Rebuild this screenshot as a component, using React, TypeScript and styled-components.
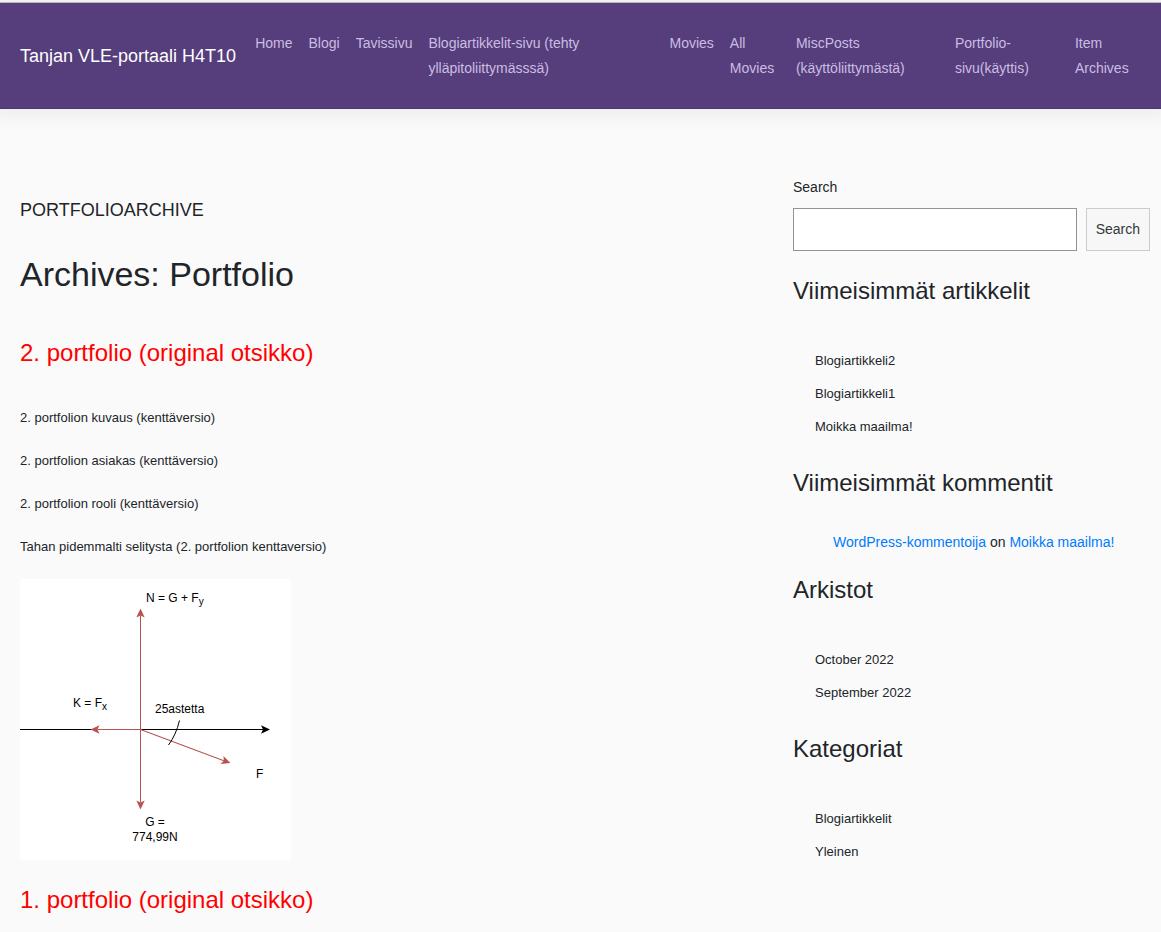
import React from "react";
import styled, { createGlobalStyle } from "styled-components";

const GlobalStyle = createGlobalStyle`
  * { box-sizing: border-box; }
  body {
    margin: 0;
    background: #fafafa;
    color: #212529;
    font: 14px/25px "Liberation Sans", Arial, sans-serif;
  }
  h1, h2, p, ul, ol { margin: 0; padding: 0; font-weight: 400; }
  ul, ol { list-style: none; }
  a { text-decoration: none; }
`;

const Header = styled.header`
  display: flex;
  align-items: center;
  gap: 11px;
  padding: 20px;
  background: #563d7c;
  border-top: 1px solid #b9b9b4;
  margin-top: 2px;
  box-shadow: 0 0 16px 8px rgba(0, 0, 0, 0.05), inset 0 -1px 0 rgba(0, 0, 0, 0.1);
`;

const Brand = styled.a`
  flex: none;
  color: #fff;
  font-size: 18px;
`;

const Menu = styled.ul`
  display: flex;
  flex: 1;
`;

const MenuItem = styled.li<{ $share?: number }>`
  flex: ${(p) => (p.$share ? `${p.$share} 1 0` : "none")};
  min-width: 0;
`;

const MenuLink = styled.a`
  display: block;
  padding: 8px;
  color: #cbbde2;
`;

const Page = styled.div`
  display: grid;
  grid-template-columns: 2fr 1fr;
`;

const Main = styled.main`
  padding: 89px 20px 0;
`;

const Kicker = styled.p`
  font-size: 18px;
`;

const PageTitle = styled.h1`
  margin-top: 31px;
  font-size: 34px;
  line-height: 40px;
`;

const Post = styled.article`
  &:first-of-type { margin-top: 44px; }
`;

const PostTitle = styled.h2`
  margin-bottom: 38px;
  color: #f00;
  font-size: 24px;
  line-height: 30px;
`;

const Field = styled.p`
  margin-bottom: 20px;
  font-size: 13px;
  line-height: 23px;
`;

const Diagram = styled.svg`
  display: block;
  width: 271px;
  height: 281px;
  margin: 21px 0 25px;
  background: #fff;
  font: 12px "Liberation Sans", Arial, sans-serif;
`;

const Sidebar = styled.aside`
  padding: 66px 11px 0 19px;
`;

const SearchForm = styled.form`
  margin-bottom: 25px;
`;

const SearchLabel = styled.label`
  display: block;
  margin-bottom: 8px;
`;

const SearchRow = styled.div`
  display: flex;
  gap: 9px;
`;

const SearchInput = styled.input`
  flex: 1;
  min-width: 0;
  height: 43px;
  padding: 8px;
  border: 1px solid #949494;
  background: #fff;
  font: inherit;
`;

const SearchButton = styled.button`
  padding: 0 9px;
  border: 1px solid #ccc;
  background: #f7f7f7;
  color: #32373c;
  font: inherit;
`;

const WidgetTitle = styled.h2<{ $compact?: boolean }>`
  margin-bottom: ${(p) => (p.$compact ? 32 : 38)}px;
  font-size: 24px;
  line-height: 30px;
`;

const LinkList = styled.ul`
  margin-bottom: 25px;
  padding-left: 22px;
  font-size: 13px;
  line-height: 33px;
`;

const PlainLink = styled.a`
  color: inherit;
`;

const Comments = styled.ol`
  margin-bottom: 20px;
  padding-left: 40px;
`;

const BlueLink = styled.a`
  color: #007bff;
`;

const menu: { label: string; share?: number }[] = [
  { label: "Home" },
  { label: "Blogi" },
  { label: "Tavissivu" },
  { label: "Blogiartikkelit-sivu (tehty ylläpitoliittymässsä)", share: 241 },
  { label: "Movies" },
  { label: "All Movies", share: 66 },
  { label: "MiscPosts (käyttöliittymästä)", share: 159 },
  { label: "Portfolio-sivu(käyttis)", share: 120 },
  { label: "Item Archives", share: 74 },
];

const fields = [
  "2. portfolion kuvaus (kenttäversio)",
  "2. portfolion asiakas (kenttäversio)",
  "2. portfolion rooli (kenttäversio)",
  "Tahan pidemmalti selitysta (2. portfolion kenttaversio)",
];

function Widget({ title, links }: { title: string; links: string[] }) {
  return (
    <section>
      <WidgetTitle>{title}</WidgetTitle>
      <LinkList>
        {links.map((link) => (
          <li key={link}>
            <PlainLink href="#">{link}</PlainLink>
          </li>
        ))}
      </LinkList>
    </section>
  );
}

function Arrow({ x, y, angle, length, color }: { x: number; y: number; angle: number; length: number; color: string }) {
  return (
    <g transform={`translate(${x} ${y}) rotate(${angle})`}>
      <path d={`M0 0H${length - 7}`} stroke={color} />
      <path d={`M${length} 0l-9 4.200 2-4.200-2-4.200z`} fill={color} />
    </g>
  );
}

function ForceDiagram() {
  const red = "#b85450";
  return (
    <Diagram viewBox="0 0 271 281" role="img" aria-label="Voimakuvio">
      <path d="M0 150.500H72" stroke="#000" />
      <Arrow x={120.5} y={150.5} angle={0} length={129.5} color="#000" />
      <Arrow x={120.5} y={150.5} angle={180} length={50} color={red} />
      <Arrow x={120.5} y={150.5} angle={-90} length={121} color={red} />
      <Arrow x={120.5} y={150.5} angle={90} length={80} color={red} />
      <Arrow x={120.5} y={150.5} angle={20.5} length={96} color={red} />
      <path d="M159.500 141.500Q156 156 148.500 166" fill="none" stroke="#000" />
      <text x="126" y="23">N = G + F<tspan dy="3" fontSize="10">y</tspan></text>
      <text x="53" y="128">K = F<tspan dy="3" fontSize="10">x</tspan></text>
      <text x="135" y="134">25astetta</text>
      <text x="236" y="199">F</text>
      <text x="135" y="247" textAnchor="middle">G =</text>
      <text x="135" y="262" textAnchor="middle">774,99N</text>
    </Diagram>
  );
}

export default function App() {
  return (
    <>
      <GlobalStyle />
      <Header>
        <Brand href="#">Tanjan VLE-portaali H4T10</Brand>
        <Menu>
          {menu.map(({ label, share }) => (
            <MenuItem key={label} $share={share}>
              <MenuLink href="#">{label}</MenuLink>
            </MenuItem>
          ))}
        </Menu>
      </Header>
      <Page>
        <Main>
          <Kicker>PORTFOLIOARCHIVE</Kicker>
          <PageTitle>Archives: Portfolio</PageTitle>
          <Post>
            <PostTitle>2. portfolio (original otsikko)</PostTitle>
            {fields.map((field) => (
              <Field key={field}>{field}</Field>
            ))}
            <ForceDiagram />
          </Post>
          <Post>
            <PostTitle>1. portfolio (original otsikko)</PostTitle>
          </Post>
        </Main>
        <Sidebar>
          <SearchForm onSubmit={(e) => e.preventDefault()}>
            <SearchLabel htmlFor="search">Search</SearchLabel>
            <SearchRow>
              <SearchInput id="search" type="search" />
              <SearchButton type="submit">Search</SearchButton>
            </SearchRow>
          </SearchForm>
          <Widget title="Viimeisimmät artikkelit" links={["Blogiartikkeli2", "Blogiartikkeli1", "Moikka maailma!"]} />
          <section>
            <WidgetTitle $compact>Viimeisimmät kommentit</WidgetTitle>
            <Comments>
              <li>
                <BlueLink href="#">WordPress-kommentoija</BlueLink> on <BlueLink href="#">Moikka maailma!</BlueLink>
              </li>
            </Comments>
          </section>
          <Widget title="Arkistot" links={["October 2022", "September 2022"]} />
          <Widget title="Kategoriat" links={["Blogiartikkelit", "Yleinen"]} />
        </Sidebar>
      </Page>
    </>
  );
}
